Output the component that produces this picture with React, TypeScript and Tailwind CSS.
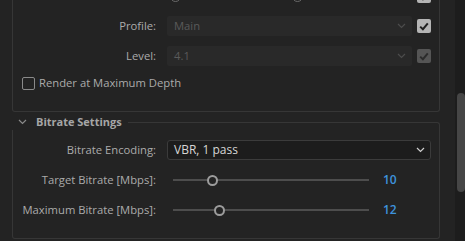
import React from 'react';

const font = { fontFamily: '"Open Sans", "Noto Sans", sans-serif' };

function Chevron({ className }: { className: string }) {
  return (
    <svg width="9" height="6" viewBox="0 0 9 6" className={className}>
      <path d="M1 1 L4.5 4.5 L8 1" fill="none" stroke="currentColor" strokeWidth="1.2" />
    </svg>
  );
}

function Check({ on }: { on: boolean }) {
  return (
    <div className={`w-[14px] h-[14px] rounded-[2px] flex items-center justify-center ${on ? 'bg-[#b4b4b4] text-[#1f1f1f]' : 'bg-[#555555] text-[#2c2c2c]'}`}>
      <svg width="10" height="9" viewBox="0 0 10 9">
        <path d="M1.2 4.6 L3.9 7.2 L8.8 1.4" fill="none" stroke="currentColor" strokeWidth="2" />
      </svg>
    </div>
  );
}

function Radio({ label }: { label: string }) {
  return (
    <div className="flex items-center gap-[4px]">
      <div className="w-[11px] h-[11px] rounded-full border-[1.5px] border-[#6a6a6a]" />
      <span className="text-[#9a9a9a]">{label}</span>
    </div>
  );
}

function Label({ children }: { children: React.ReactNode }) {
  return <div className="w-[143px] shrink-0 text-right text-[#ababab]">{children}</div>;
}

function Slider({ pos, value }: { pos: number; value: string }) {
  return (
    <div className="flex items-center ml-[6px]">
      <div className="relative w-[196px] h-[11px] flex items-center">
        <div className="w-full h-[2px] bg-[#4d4d4d]" />
        <div
          className="absolute top-0 w-[11px] h-[11px] rounded-full border-2 border-[#9c9c9c] bg-[#232323]"
          style={{ left: pos - 5 }}
        />
      </div>
      <span className="ml-[14px] text-[#3e92dc] font-semibold text-[12px]">{value}</span>
    </div>
  );
}

export default function App() {
  return (
    <div className="w-[465px] h-[241px] overflow-hidden bg-[#232323] flex text-[11.25px] leading-[20px]" style={font}>
      <div className="flex-1 pl-[12px] pr-[15px] -mt-[14px]">
        {/* Video settings panel, scrolled partly out of view */}
        <div className="border-x border-b border-[#363636] rounded-b-[3px] pb-[21px]">
          <div className="flex items-center h-[20px]">
            <Label>Performance:</Label>
            <div className="ml-[14px] flex items-center gap-[76px]">
              <Radio label="H.265" />
              <Radio label="H.2" />
            </div>
            <div className="ml-auto mr-[8px]">
              <Check on />
            </div>
          </div>
          <div className="flex items-center h-[20px] mt-[10px]">
            <Label>Profile:</Label>
            <div className="ml-[11px] w-[245px] h-[20px] bg-[#292929] rounded-[2px] flex items-center justify-between pl-[7px] pr-[6px] text-[#5a5a5a]">
              <span>Main</span>
              <Chevron className="text-[#4c4c4c]" />
            </div>
            <div className="ml-[5px]">
              <Check on />
            </div>
          </div>
          <div className="flex items-center h-[20px] mt-[10px]">
            <Label>Level:</Label>
            <div className="ml-[11px] w-[245px] h-[20px] bg-[#292929] rounded-[2px] flex items-center justify-between pl-[7px] pr-[6px] text-[#5a5a5a]">
              <span>4.1</span>
              <Chevron className="text-[#4c4c4c]" />
            </div>
            <div className="ml-[5px]">
              <Check on={false} />
            </div>
          </div>
          <div className="flex items-center h-[14px] mt-[10px] ml-[9px]">
            <div className="w-[13px] h-[13px] rounded-[2px] border-[1.5px] border-[#8a8a8a]" />
            <span className="ml-[4px] text-[#ababab]">Render at Maximum Depth</span>
          </div>
        </div>

        {/* Bitrate Settings */}
        <div className="mt-[2px]">
          <div className="flex h-[16px]">
            <div className="flex items-center pl-[6px]">
              <Chevron className="text-[#8a8a8a]" />
              <span className="ml-[9px] font-bold text-[#a6a6a6] text-[11px] leading-[16px]">Bitrate Settings</span>
            </div>
            <div className="flex-1 ml-[6px] mt-[8px] border-t border-r border-[#363636] rounded-tr-[3px]" />
          </div>
          <div className="border-x border-b border-[#363636] rounded-b-[3px] pt-[10px] pb-[18px]">
            <div className="flex items-center h-[20px]">
              <Label>Bitrate Encoding:</Label>
              <div className="ml-[11px] w-[264px] h-[20px] bg-[#1c1c1c] border border-[#3b3b3b] rounded-[3px] flex items-center justify-between pl-[6px] pr-[5px] text-[#d6d6d6] text-[12px]">
                <span>VBR, 1 pass</span>
                <Chevron className="text-[#cfcfcf]" />
              </div>
            </div>
            <div className="flex items-center h-[20px] mt-[10px]">
              <Label>Target Bitrate [Mbps]:</Label>
              <div className="ml-[11px]">
                <Slider pos={39} value="10" />
              </div>
            </div>
            <div className="flex items-center h-[20px] mt-[10px]">
              <Label>Maximum Bitrate [Mbps]:</Label>
              <div className="ml-[11px]">
                <Slider pos={46} value="12" />
              </div>
            </div>
          </div>
        </div>
      </div>

      {/* Scrollbar */}
      <div className="w-[10px] h-full bg-[#1d1d1d] pt-[93px] pl-[2px]">
        <div className="w-[8px] h-[99px] rounded-full bg-[#464646]" />
      </div>
    </div>
  );
}
